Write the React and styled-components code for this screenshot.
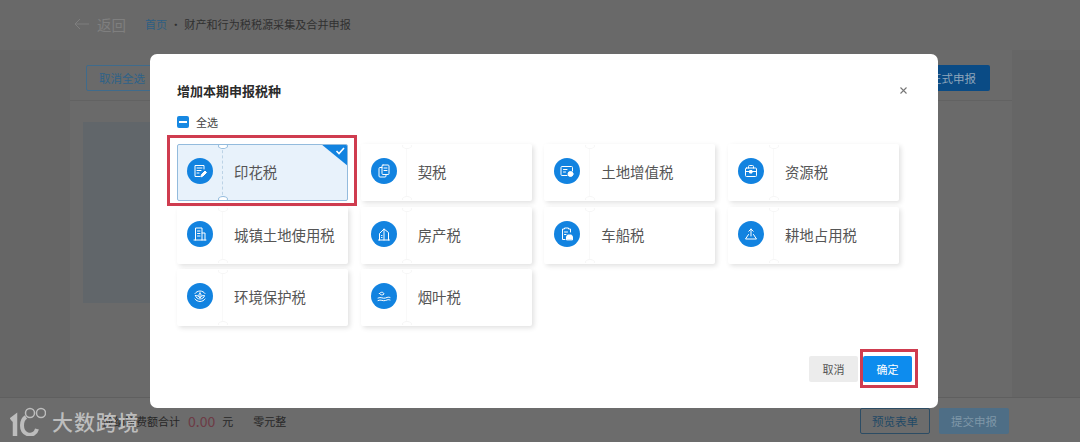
import React from "react";
import styled, { createGlobalStyle } from "styled-components";

const Global = createGlobalStyle`
  html, body { margin: 0; padding: 0; background: #666; }
  * { box-sizing: border-box; }
  body { font-family: "Noto Sans CJK SC", "Liberation Sans", sans-serif; }
`;

const Page = styled.div`
  position: relative; width: 1080px; height: 442px; overflow: hidden;
  background: #666; display: flex; flex-direction: column;
`;
const TopBar = styled.header`
  height: 50px; flex: none; background: #696969; display: flex; align-items: center;
  padding: 0 0 2px 74px;
`;
const Back = styled.span`
  display: flex; align-items: center; gap: 8px; width: 71px; color: #7f7f7f; font-size: 14.5px;
`;
const Crumb = styled.span`
  font-size: 11.1px; color: ${p => (p.$link ? "#2e5f82" : "#303030")};
  margin-right: ${p => p.$gap || 0}px;
`;
const Panel = styled.main`
  flex: 1; margin: 0 68px 0 70px; background: #6a6a6a; display: flex; flex-direction: column;
`;
const Toolbar = styled.div`
  height: 51px; flex: none; border-bottom: 1px solid #626262; display: flex; align-items: center;
  justify-content: space-between; padding: 6px 22px 0 16px;
`;
const BgButton = styled.div`
  height: 26px; width: ${p => p.$w}px; border-radius: 2px; font-size: 11.500px; display: flex;
  align-items: center; justify-content: center;
  color: ${p => p.$fg}; background: ${p => p.$bg || "transparent"};
  border: ${p => (p.$line ? `1px solid ${p.$line}` : "0")};
`;
const Blue = styled.div`
  height: 181px; width: 500px; margin: 21px 0 0 13px; background: #61666a;
`;
const Bottom = styled.footer`
  height: 45px; flex: none; background: #6c6c6c; border-top: 1px solid #5f5f5f;
  display: flex; align-items: center; padding: 1px 71px 0 103px; font-size: 11px; color: #262626;
`;
const Amount = styled.span`
  color: #6d3b45; font-size: 14px; margin: 0 7px 0 8px;
`;
const Words = styled.span`
  margin: 0 auto 0 20px;
`;
const Actions = styled.div`
  display: flex; gap: 9px;
`;

const Modal = styled.section`
  position: absolute; left: 150px; top: 54px; width: 788px; height: 354px;
  background: #fff; border-radius: 7px; padding: 27px 26px 26px 27px;
  display: flex; flex-direction: column;
`;
const Head = styled.div`
  display: flex; align-items: center; justify-content: space-between; height: 19px; padding-right: 4px;
`;
const Title = styled.h2`
  margin: 0; font-size: 13px; font-weight: 700; color: #2b2b2b;
`;
const Close = styled.span`
  display: flex; color: #777;
`;
const SelectAll = styled.label`
  display: flex; align-items: center; gap: 7px; margin-top: 16px; height: 12px;
  font-size: 11px; color: #444;
`;
const Box = styled.span`
  width: 12px; height: 12px; border-radius: 2px; background: #1788e2; display: flex;
  align-items: center; justify-content: center;
  &::after { content: ""; width: 8px; height: 2px; background: #fff; }
`;
const Grid = styled.div`
  margin-top: 16px; display: grid; grid-template-columns: repeat(4, 171px);
  column-gap: 12.67px; row-gap: 5.5px;
`;
const Card = styled.div`
  position: relative; height: 57px; display: flex; align-items: center; border-radius: 2px;
  background: ${p => (p.$on ? "#e8f2fb" : "#fff")};
  border: 1px solid ${p => (p.$on ? "#93bbdd" : "transparent")};
  box-shadow: ${p => (p.$on ? "none" : "2px 2px 5px rgba(0,0,0,.12)")};
  overflow: hidden;
  &::before, &::after {
    content: ""; position: absolute; left: 40px; width: 8px; height: 4px;
    background: #fff; border: 1px solid ${p => (p.$on ? "#93bbdd" : "#f6f6f6")};
    border-radius: 50%;
  }
  &::before { top: -2px; }
  &::after { bottom: -2px; }
`;
const Stub = styled.div`
  width: 45px; height: 100%; flex: none; display: flex; align-items: center; justify-content: center;
  padding-bottom: 3px;
  border-right: 1px ${p => (p.$on ? "dashed #bcd3e6" : "solid #f9f9f9")};
`;
const Disc = styled.span`
  width: 26px; height: 26px; border-radius: 50%; background: #1283e0; display: flex;
  align-items: center; justify-content: center;
`;
const Label = styled.span`
  margin-left: 11px; padding-bottom: 2px; font-size: 14.4px; color: #555; white-space: nowrap;
`;
const Corner = styled.svg`
  position: absolute; right: -1px; top: -1px;
`;
const Footer = styled.div`
  margin-top: auto; display: flex; justify-content: flex-end; gap: 5px;
`;
const DialogButton = styled.button`
  width: 49px; height: 26px; border: 0; border-radius: 2px; padding: 0; font: inherit; font-size: 11px;
  color: ${p => (p.$primary ? "#fff" : "#555")}; background: ${p => (p.$primary ? "#0d8cee" : "#ececec")};
`;
const Mark = styled.div`
  position: absolute; border: 3px solid #cf3c4f;
  left: ${p => p.$x}px; top: ${p => p.$y}px; width: ${p => p.$w}px; height: ${p => p.$h}px;
`;
const Watermark = styled.div`
  position: absolute; left: 10px; top: 406px; display: flex; align-items: center; gap: 6px;
  color: #bdbdbd; font-size: 21px; font-weight: 500; line-height: 30px; letter-spacing: .9px;
`;

const Ico = ({ children }) => (
  <svg width="16" height="16" viewBox="0 0 16 16" fill="none" stroke="#fff" strokeWidth="1" strokeLinejoin="round" strokeLinecap="round">
    {children}
  </svg>
);

const icons = {
  stamp: <Ico><path d="M12 6V2.500H3v11h5" /><path d="M5 5h5M5 7.500h4M5 10h2" /><path d="M9 13.500l.5-2 3.500-3.500 1.500 1.500-3.500 3.500z" fill="#fff" /></Ico>,
  deed: <Ico><rect x="6" y="2" width="7" height="9.500" rx="1" /><path d="M6 4.500H4a1 1 0 0 0-1 1V13a1 1 0 0 0 1 1h5a1 1 0 0 0 1-1v-1.500" /><path d="M8 5h3M8 7.500h3" /></Ico>,
  land: <Ico><path d="M8 12.500H3a1 1 0 0 1-1-1v-7a1 1 0 0 1 1-1h9.500a1 1 0 0 1 1 1V8" /><path d="M4.500 6.500H8M4.500 9h2" /><circle cx="11.500" cy="11" r="2.500" fill="#fff" /></Ico>,
  res: <Ico><path d="M5.500 5V3.500a1 1 0 0 1 1-1h3a1 1 0 0 1 1 1V5" /><rect x="2.500" y="5" width="11" height="8.500" rx="1" /><path d="M2.500 8.500h11" /><rect x="7" y="7.500" width="2" height="2.500" fill="#fff" /></Ico>,
  city: <Ico><path d="M3.500 14V2h6.500v12" /><path d="M10 7h3v7" /><path d="M2 14h12M5.500 5H8M5.500 7.500H8M5.500 10H8" /></Ico>,
  house: <Ico><path d="M3.500 14V7.500L8 3l4.500 3.500V14" /><path d="M8 3v11M2.500 14h11M5.500 9.500h.5M5.500 11.500h.5" /></Ico>,
  car: <Ico><path d="M11.500 6V3h-2V2h-4v1h-2v10.500H6" /><path d="M5.500 6h3M5.500 8.500h1.500" /><path d="M7.500 13.500v-2.500l1-2h4l1 2v2.500z" fill="#fff" /></Ico>,
  farm: <Ico><path d="M5.500 8.500L2.500 13h11l-3-4.500" /><path d="M8 3v7M5.800 5.200L8 3l2.200 2.200" /></Ico>,
  env: <Ico><path d="M3 5.500A6 6 0 0 1 13 5.500M13 11A6 6 0 0 1 3 11" /><path d="M8 5c1.500 1.200 1.500 3 0 4.500C6.500 8 6.500 6.200 8 5z" /><path d="M3.500 7.500c1.800-.3 3.500.6 4.500 2.500 1-1.900 2.700-2.800 4.500-2.500-.3 2.300-2.500 3.500-4.500 3.500S3.800 9.800 3.500 7.500z" /></Ico>,
  leaf: <Ico><path d="M2 12.500c3-1.500 5 1 7.500 0s3-1 4.500-.5" /><path d="M2 10c3-1.500 5 1 7.500 0s3-1 4.500-.5" /><path d="M3.500 5.500c1.500-2 4-1.500 4.500.5-1.500 1.500-3.500 1.200-4.500-.5z" /></Ico>,
};

const taxes = [
  ["印花税", "stamp", true], ["契税", "deed"], ["土地增值税", "land"], ["资源税", "res"],
  ["城镇土地使用税", "city"], ["房产税", "house"], ["车船税", "car"], ["耕地占用税", "farm"],
  ["环境保护税", "env"], ["烟叶税", "leaf"],
];

export default function App() {
  return (
    <Page>
      <Global />
      <TopBar>
        <Back>
          <svg width="15" height="12" viewBox="0 0 15 12" fill="none" stroke="#7f7f7f" strokeWidth="1">
            <path d="M15 6H1M6 1L1 6l5 5" />
          </svg>
          返回
        </Back>
        <Crumb $link $gap={3}>首页</Crumb>
        <Crumb $gap={3}>·</Crumb>
        <Crumb>财产和行为税税源采集及合并申报</Crumb>
      </TopBar>
      <Panel>
        <Toolbar>
          <BgButton $w={72} $line="#3f6b8c" $fg="#2e6288">取消全选</BgButton>
          <BgButton $w={74} $bg="#0a4b85" $fg="#8ea6bb">正式申报</BgButton>
        </Toolbar>
        <Blue />
      </Panel>
      <Bottom>
        应纳税费额合计
        <Amount>0.00</Amount>
        元
        <Words>零元整</Words>
        <Actions>
          <BgButton $w={70} $line="#2c4c64" $fg="#1f4966">预览表单</BgButton>
          <BgButton $w={70} $bg="#4e6e86" $fg="#7f97a8">提交申报</BgButton>
        </Actions>
      </Bottom>

      <Modal>
        <Head>
          <Title>增加本期申报税种</Title>
          <Close>
            <svg width="9" height="9" viewBox="0 0 9 9" stroke="#777" strokeWidth="1.100">
              <path d="M1.500 1.500l6 6M7.500 1.500l-6 6" />
            </svg>
          </Close>
        </Head>
        <SelectAll><Box />全选</SelectAll>
        <Grid>
          {taxes.map(([name, icon, on]) => (
            <Card key={name} $on={on}>
              <Stub $on={on}><Disc>{icons[icon]}</Disc></Stub>
              <Label>{name}</Label>
              {on && (
                <Corner width="27" height="22" viewBox="0 0 27 22">
                  <path d="M0 0H27V22z" fill="#1283e0" />
                  <path d="M15.500 7l2.500 2.500 5-5.500" fill="none" stroke="#fff" strokeWidth="1.600" />
                </Corner>
              )}
            </Card>
          ))}
        </Grid>
        <Footer>
          <DialogButton>取消</DialogButton>
          <DialogButton $primary>确定</DialogButton>
        </Footer>
      </Modal>

      <Mark $x={167} $y={135} $w={190} $h={71} />
      <Mark $x={860} $y={349} $w={58} $h={39} />

      <Watermark>
        <svg width="36" height="30" viewBox="0 0 36 30" fill="none" stroke="#bdbdbd">
          <path d="M1 14l4-3v19" strokeWidth="4.500" />
          <path d="M16 11c-5 3-6 14 1 17 5 2 9-1 10-5" strokeWidth="4" />
          <circle cx="20" cy="7" r="4.500" strokeWidth="1.500" />
          <circle cx="31" cy="7" r="4.500" strokeWidth="1.500" />
        </svg>
        大数跨境
      </Watermark>
    </Page>
  );
}
